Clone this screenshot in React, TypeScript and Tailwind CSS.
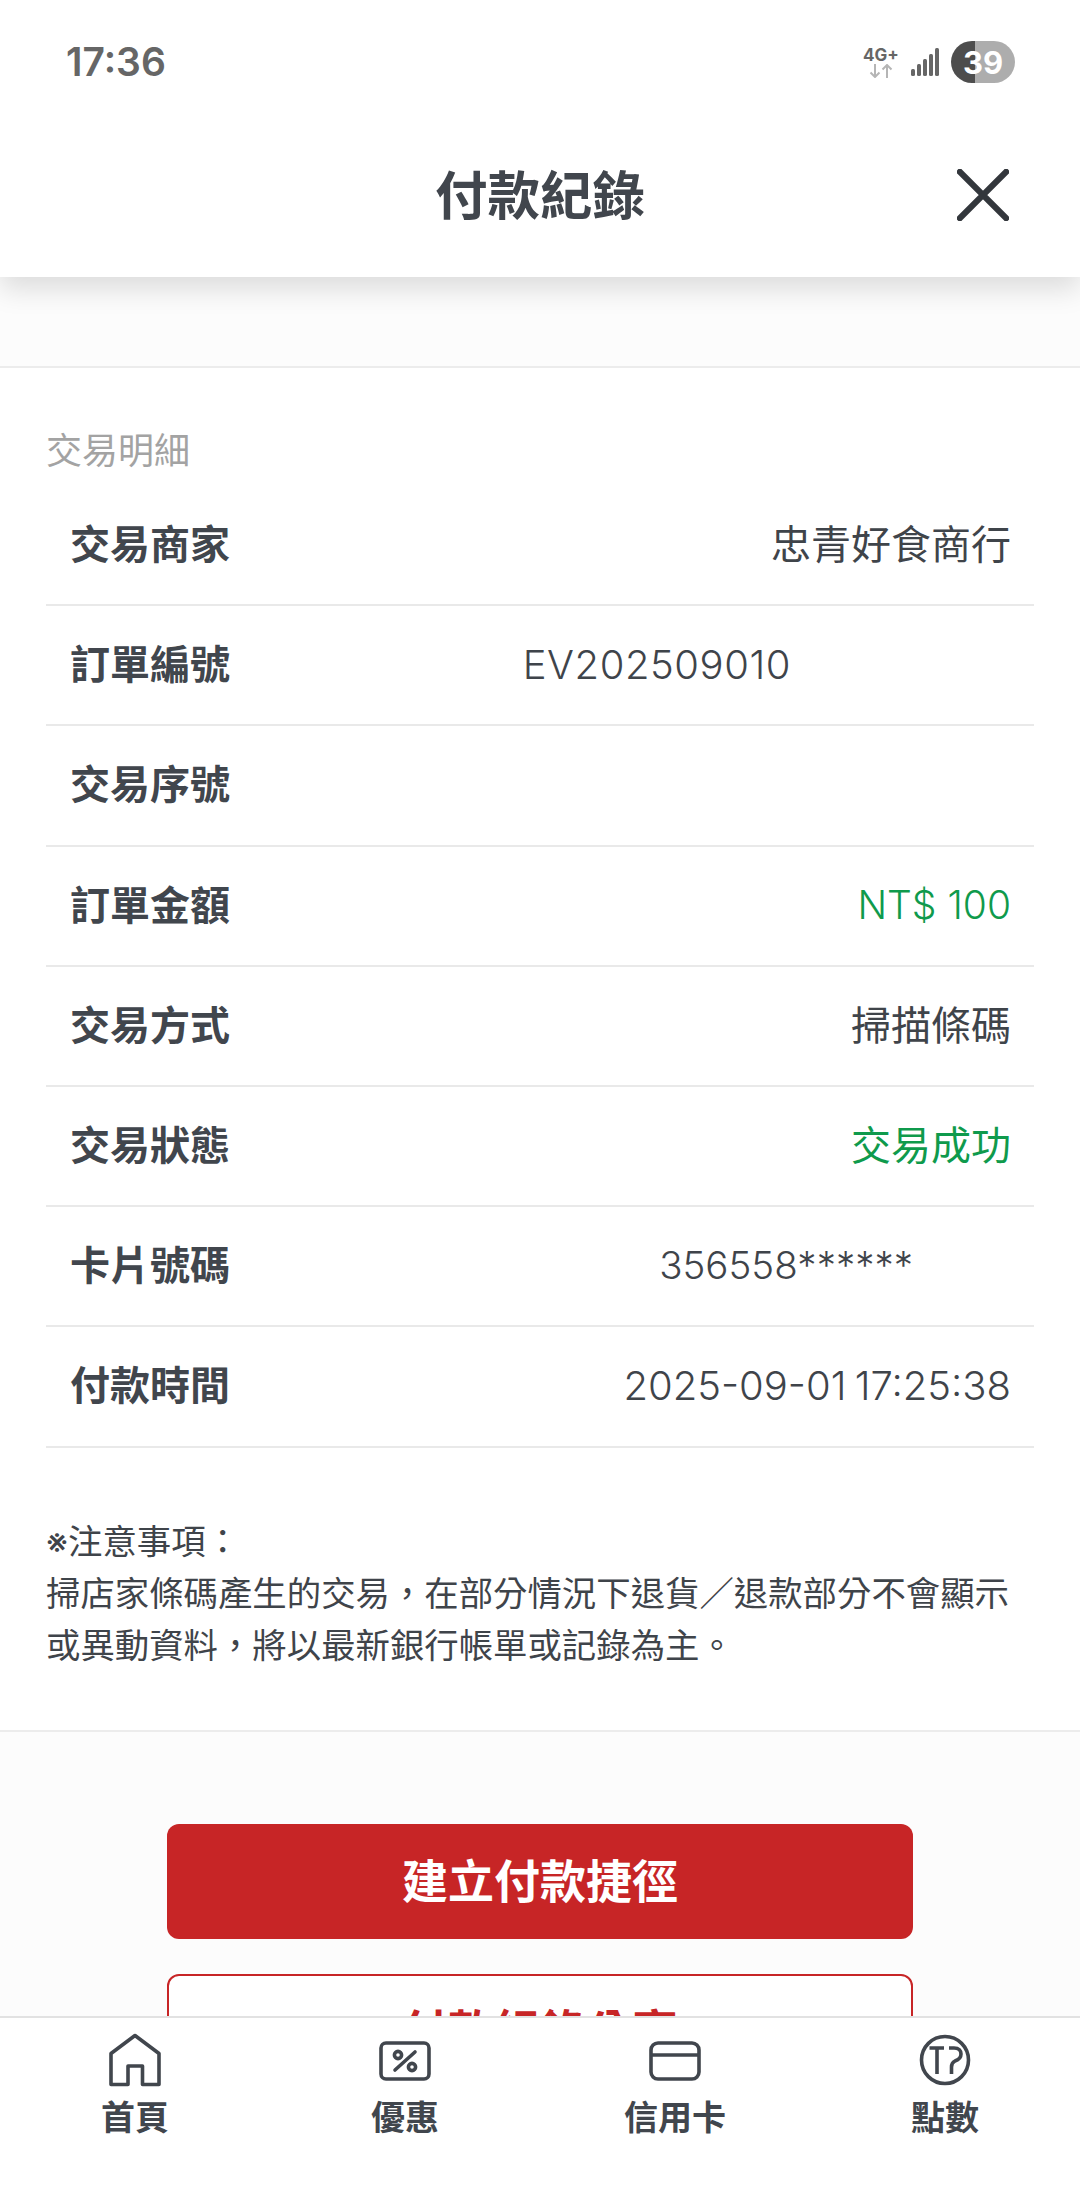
const rows: { label: string; value?: string; cls?: string }[] = [
  { label: "交易商家", value: "忠青好食商行" },
  { label: "訂單編號", value: "EV202509010", cls: "mr-[220px] font-light tracking-[0.55px]" },
  { label: "交易序號" },
  { label: "訂單金額", value: "NT$ 100", cls: "font-light !text-[#0f9a4c] !text-[39px]" },
  { label: "交易方式", value: "掃描條碼" },
  { label: "交易狀態", value: "交易成功", cls: "!text-[#0f9a4c]" },
  { label: "卡片號碼", value: "356558******", cls: "mr-[98px] font-light !text-[38.5px]" },
  { label: "付款時間", value: "2025-09-01 17:25:38", cls: "font-light [word-spacing:-3px]" },
];

const HomeIcon = () => (
  <svg width="54" height="54" viewBox="0 0 54 54" fill="none" stroke="#41464d" strokeWidth="3.6" strokeLinejoin="round">
    <path d="M27 2.5 L51 20.5 V51.5 H34.5 V33 H20 V51.5 H3 V20.5 Z" />
  </svg>
);

const PercentIcon = () => (
  <svg width="54" height="54" viewBox="0 0 54 54" fill="none" stroke="#41464d" strokeWidth="3.6">
    <rect x="3" y="10" width="48" height="36" rx="5" />
    <circle cx="20" cy="22" r="3.6" />
    <circle cx="34" cy="34" r="3.6" />
    <path d="M17 37 L37 19" strokeLinecap="round" />
  </svg>
);

const CardIcon = () => (
  <svg width="54" height="54" viewBox="0 0 54 54" fill="none" stroke="#41464d" strokeWidth="3.6">
    <rect x="3" y="10" width="48" height="36" rx="7" />
    <path d="M3 22 H51" />
  </svg>
);

const PointIcon = () => (
  <svg width="54" height="54" viewBox="0 0 54 54" fill="none" stroke="#41464d" strokeWidth="3.6">
    <circle cx="27" cy="27" r="23.5" />
    <path d="M11.5 15 H26 M19 15 V41" />
    <path d="M31 15 H36 C41 15 43 18 43 21 C43 25 40 27 37 28 C35 29 33.5 31 33.5 34 V41" />
  </svg>
);

const tabs = [
  { label: "首頁", icon: <HomeIcon /> },
  { label: "優惠", icon: <PercentIcon /> },
  { label: "信用卡", icon: <CardIcon /> },
  { label: "點數", icon: <PointIcon /> },
];

const App = () => {
  return (
    <div className="relative flex h-[2205px] w-[1080px] flex-col overflow-hidden bg-white font-['Inter','Noto_Sans_CJK_TC',sans-serif] text-[#41464d]">
      <header className="relative z-10 h-[277px] bg-white shadow-[0_12px_26px_rgba(0,0,0,0.13)]">
        <div className="flex h-[122px] items-start justify-between pl-[66px] pr-[65px] pt-[37px]">
          <span className="text-[39px] font-semibold leading-[50px] text-[#666]">17:36</span>
          <div className="flex items-center pt-[4px]">
            <div className="flex w-[36px] flex-col items-center leading-none">
              <span className="text-[17px] font-bold leading-[18px] text-[#666]">4G+</span>
              <svg width="26" height="14" viewBox="0 0 26 14" fill="none" stroke="#b5b5b5" strokeWidth="2">
                <path d="M7 0 V13 M2.5 8.5 L7 13 L11.5 8.5 M19 14 V1 M14.5 5.5 L19 1 L23.5 5.5" />
              </svg>
            </div>
            <svg className="ml-[12px]" width="28" height="28" viewBox="0 0 28 28" fill="#666">
              <rect x="0" y="21" width="4" height="7" rx="1.5" />
              <rect x="6" y="16" width="4" height="12" rx="1.5" />
              <rect x="12" y="11" width="4" height="17" rx="1.5" />
              <rect x="18" y="6" width="4" height="22" rx="1.5" />
              <rect x="24" y="0" width="4" height="28" rx="1.5" />
            </svg>
            <div className="ml-[12px] flex h-[42px] w-[64px] items-center justify-center rounded-full bg-[linear-gradient(90deg,#4d4d4d_0,#4d4d4d_38%,#adadad_38%,#adadad_100%)] text-[31px] font-bold leading-none text-white">
              39
            </div>
          </div>
        </div>
        <div className="relative flex h-[155px] items-start justify-center">
          <h1 className="pt-[44px] text-[52.5px] font-bold leading-[60px]">付款紀錄</h1>
          <svg className="absolute right-[71px] top-[47px]" width="52" height="52" viewBox="0 0 54 54" fill="none" stroke="#33373c" strokeWidth="6.5" strokeLinecap="round">
            <path d="M3 3 L51 51 M51 3 L3 51" />
          </svg>
        </div>
      </header>

      <div className="h-[91px] border-b-2 border-[#ececec] bg-[#fcfcfc]" />

      <main className="flex flex-col bg-white pb-[58px] pl-[46px] pr-[46px] pt-[58px]">
        <h2 className="text-[36px] leading-[50px] text-[#a3a3a3]">交易明細</h2>
        <div className="mt-[10px]">
          {rows.map((row) => (
            <div key={row.label} className="flex h-[120.2px] items-center justify-between border-b-2 border-[#e9e9e9] pl-[24px] pr-[23px]">
              <span className="text-[40px] font-bold">{row.label}</span>
              {row.value && <span className={`text-[40px] text-[#3f444a] ${row.cls ?? ""}`}>{row.value}</span>}
            </div>
          ))}
        </div>
        <p className="mt-[68px] text-[34.4px] leading-[52px] text-[#3f444a]">
          ※注意事項：
          <br />
          掃店家條碼產生的交易，在部分情況下退貨／退款部分不會顯示
          <br />
          或異動資料，將以最新銀行帳單或記錄為主。
        </p>
      </main>

      <div className="flex flex-1 flex-col items-center border-t-2 border-[#ececec] bg-[#fcfcfc] pt-[92px]">
        <button className="flex h-[115px] w-[746px] items-center justify-center rounded-[12px] bg-[#c72526] text-[46px] font-bold text-white">
          建立付款捷徑
        </button>
        <button className="mt-[35px] flex h-[115px] w-[746px] items-center justify-center rounded-[12px] border-2 border-[#c72526] bg-white text-[46px] font-bold text-[#c72526]">
          付款紀錄分享
        </button>
      </div>

      <nav className="absolute bottom-0 left-0 grid h-[189px] w-full grid-cols-4 border-t-2 border-[#e2e2e2] bg-white pt-[15px]">
        {tabs.map((tab) => (
          <div key={tab.label} className="flex flex-col items-center">
            {tab.icon}
            <span className="mt-[9px] text-[34px] font-bold leading-[44px]">{tab.label}</span>
          </div>
        ))}
      </nav>
    </div>
  );
};

export default App;
